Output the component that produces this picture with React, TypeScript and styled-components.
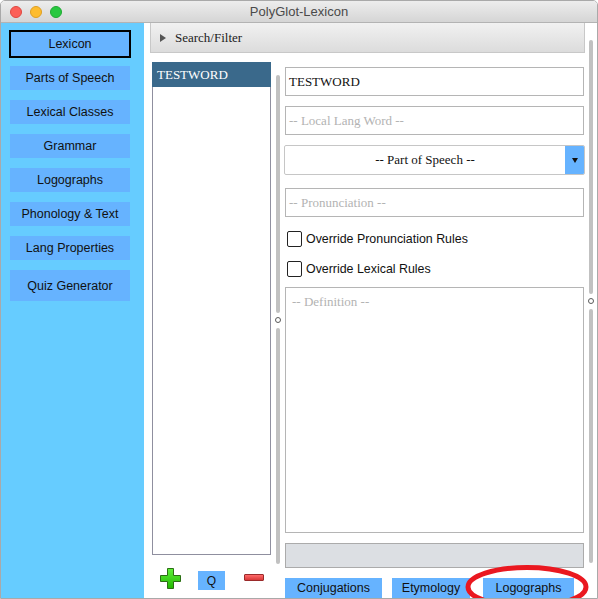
import React from "react";
import styled, { createGlobalStyle } from "styled-components";

const Global = createGlobalStyle`
  html, body { margin: 0; padding: 0; background: #ffffff; overflow: hidden; }
  * { box-sizing: border-box; }
`;

const SANS = `"Liberation Sans", Arial, Helvetica, sans-serif`;
const SERIF = `"Liberation Serif", "Times New Roman", serif`;

const Window = styled.div`
  position: relative;
  width: 598px;
  height: 599px;
  border: 1px solid #a9a9a9;
  border-radius: 5px 5px 0 0;
  overflow: hidden;
  background: #ffffff;
  display: flex;
  flex-direction: column;
  font-family: ${SANS};
`;

const TitleBar = styled.div`
  position: relative;
  height: 22px;
  flex: none;
  background: linear-gradient(#ededed, #d5d5d5);
  border-bottom: 1px solid #b3b3b3;
  display: flex;
  align-items: center;
  justify-content: center;
  font-size: 13px;
  color: #4a4a4a;
`;

const Lights = styled.div`
  position: absolute;
  left: 9px;
  top: 5px;
  display: flex;
  gap: 8px;
`;

const Light = styled.span<{ $c: string; $b: string }>`
  width: 12px;
  height: 12px;
  border-radius: 50%;
  background: ${(p) => p.$c};
  border: 0.5px solid ${(p) => p.$b};
`;

const Body = styled.div`
  flex: 1;
  display: flex;
  min-height: 0;
`;

const Sidebar = styled.div`
  width: 143px;
  flex: none;
  background: #66ccff;
  padding: 7px 0 0 8px;
  display: flex;
  flex-direction: column;
  align-items: flex-start;
`;

const NavButton = styled.div<{ $active?: boolean; $tall?: boolean }>`
  width: ${(p) => (p.$active ? 122 : 120)}px;
  height: ${(p) => (p.$active ? 28 : p.$tall ? 31 : 24)}px;
  margin-left: ${(p) => (p.$active ? 0 : 1)}px;
  margin-bottom: ${(p) => (p.$active ? 8 : 10)}px;
  background: #66b3ff;
  border: ${(p) => (p.$active ? "2px solid #000" : "none")};
  display: flex;
  align-items: center;
  justify-content: center;
  font-family: ${SANS};
  font-size: 12.5px;
  color: #111;
`;

const Main = styled.div`
  flex: 1;
  display: flex;
  min-width: 0;
`;

const ContentCol = styled.div`
  width: 441px;
  flex: none;
  padding-left: 6px;
  display: flex;
  flex-direction: column;
`;

const SearchBar = styled.div`
  height: 30px;
  flex: none;
  border: 1px solid #c8c8c8;
  border-top: none;
  background: linear-gradient(#f1f1f1, #dcdcdc);
  display: flex;
  align-items: center;
  padding-left: 9px;
  gap: 9px;
  font-family: ${SERIF};
  font-size: 13px;
  color: #222;
`;

const Triangle = styled.span`
  width: 0;
  height: 0;
  border-top: 4px solid transparent;
  border-bottom: 4px solid transparent;
  border-left: 6px solid #555;
`;

const Row = styled.div`
  display: flex;
  margin-top: 9px;
  flex: 1;
  min-height: 0;
`;

const ListCol = styled.div`
  width: 119px;
  margin-left: 2px;
  flex: none;
  display: flex;
  flex-direction: column;
`;

const ListBox = styled.div`
  height: 493px;
  border: 1px solid #8f8f9f;
  background: #fff;
`;

const ListItem = styled.div<{ $selected?: boolean }>`
  height: 25px;
  background: ${(p) => (p.$selected ? "#3a698b" : "transparent")};
  color: ${(p) => (p.$selected ? "#fff" : "#000")};
  font-family: ${SERIF};
  font-size: 13px;
  display: flex;
  align-items: center;
  padding-left: 5px;
  margin: -1px -1px 0 -1px;
`;

const ListActions = styled.div`
  display: flex;
  align-items: flex-start;
  margin-top: 13px;
  padding-left: 8px;
`;

const QButton = styled.div`
  width: 27px;
  height: 19px;
  margin: 3px 0 0 17px;
  background: #66b3ff;
  display: flex;
  align-items: center;
  justify-content: center;
  font-size: 12px;
  color: #111;
`;

const MinusIcon = styled.div`
  width: 20px;
  height: 7px;
  margin: 6px 0 0 19px;
  background: linear-gradient(#ff6a6a, #d83838);
  border: 1px solid #9a2a2a;
  border-radius: 1px;
`;

const Splitter = styled.div<{ $top: number; $first: number; $second: number }>`
  width: ${(p) => (p.$top === 13 ? 14 : 11)}px;
  flex: none;
  padding-top: ${(p) => p.$top}px;
  padding-left: ${(p) => (p.$top === 13 ? 5 : 4)}px;
  display: flex;
  flex-direction: column;
  align-items: flex-start;

  & > .a { height: ${(p) => p.$first}px; }
  & > .b { height: ${(p) => p.$second}px; }
`;

const Thumb = styled.div`
  width: 4px;
  background: #c1c1c1;
  border-radius: 2px;
`;

const Knob = styled.div`
  width: 6px;
  height: 6px;
  margin: 4px 0 5px -1px;
  border: 1.3px solid #5a5a5a;
  border-radius: 50%;
`;

const FormCol = styled.div`
  width: 299px;
  flex: none;
  padding-top: 5px;
  display: flex;
  flex-direction: column;
`;

const Field = styled.div<{ $gap: number; $placeholder?: boolean }>`
  height: 29px;
  margin-top: ${(p) => p.$gap}px;
  border: 1px solid #b5b5b5;
  background: #fff;
  display: flex;
  align-items: center;
  padding-left: 3px;
  font-family: ${SERIF};
  font-size: 13px;
  color: ${(p) => (p.$placeholder ? "#b3b3b3" : "#111")};
`;

const Select = styled.div`
  height: 30px;
  margin: 10px -1px 0 -1px;
  border: 1px solid #c6c6c6;
  border-radius: 2px;
  background: #fff;
  display: flex;
  overflow: hidden;
`;

const SelectText = styled.div`
  flex: 1;
  display: flex;
  align-items: center;
  justify-content: center;
  font-family: ${SERIF};
  font-size: 13px;
  color: #111;
`;

const SelectArrow = styled.div`
  width: 19px;
  background: #66b3ff;
  display: flex;
  align-items: center;
  justify-content: center;
  &::after {
    content: "";
    border-left: 3.5px solid transparent;
    border-right: 3.5px solid transparent;
    border-top: 5px solid #111;
  }
`;

const CheckRow = styled.label`
  display: flex;
  align-items: center;
  height: 17px;
  margin-top: 13px;
  padding-left: 2px;
  font-family: ${SANS};
  font-size: 12.4px;
  color: #111;
`;

const Box = styled.span`
  width: 15px;
  height: 16px;
  border: 1px solid #222;
  border-radius: 2px;
  background: #fff;
  margin-right: 4px;
  flex: none;
`;

const TextArea = styled.div`
  height: 246px;
  margin-top: 10px;
  border: 1px solid #b5b5b5;
  background: #fff;
  padding: 6px 0 0 6px;
  font-family: ${SERIF};
  font-size: 13px;
  color: #b3b3b3;
`;

const GrayField = styled.div`
  height: 25px;
  margin-top: 10px;
  border: 1px solid #ababab;
  background: #dcdfe3;
`;

const TabRow = styled.div`
  display: flex;
  margin-top: 10px;
`;

const TabButton = styled.div<{ $w: number; $gap: number }>`
  width: ${(p) => p.$w}px;
  margin-left: ${(p) => p.$gap}px;
  height: 20px;
  background: #66b3ff;
  display: flex;
  align-items: center;
  justify-content: center;
  font-family: ${SANS};
  font-size: 12.5px;
  color: #111;
`;

const Annotation = styled.svg`
  position: absolute;
  left: -1px;
  top: -1px;
  width: 598px;
  height: 599px;
  pointer-events: none;
`;

const PlusIcon = () => (
  <svg width="21" height="21" viewBox="0 0 21 21">
    <defs>
      <linearGradient id="pg" x1="0" y1="0" x2="0" y2="1">
        <stop offset="0" stopColor="#5ef03a" />
        <stop offset="1" stopColor="#22b800" />
      </linearGradient>
    </defs>
    <path
      d="M7.5 0.5h6v7h7v6h-7v7h-6v-7h-7v-6h7z"
      fill="url(#pg)"
      stroke="#2b6e14"
      strokeWidth="1"
    />
  </svg>
);

const navItems = [
  "Parts of Speech",
  "Lexical Classes",
  "Grammar",
  "Logographs",
  "Phonology & Text",
  "Lang Properties",
];

export default function App() {
  return (
    <>
      <Global />
      <Window>
        <TitleBar>
          <Lights>
            <Light $c="#fc5f57" $b="#df4740" />
            <Light $c="#fdbc2e" $b="#de9f22" />
            <Light $c="#28c840" $b="#1ea932" />
          </Lights>
          PolyGlot-Lexicon
        </TitleBar>
        <Body>
          <Sidebar>
            <NavButton $active>Lexicon</NavButton>
            {navItems.map((n) => (
              <NavButton key={n}>{n}</NavButton>
            ))}
            <NavButton $tall>Quiz Generator</NavButton>
          </Sidebar>
          <Main>
            <ContentCol>
              <SearchBar>
                <Triangle />
                Search/Filter
              </SearchBar>
              <Row>
                <ListCol>
                  <ListBox>
                    <ListItem $selected>TESTWORD</ListItem>
                  </ListBox>
                  <ListActions>
                    <PlusIcon />
                    <QButton>Q</QButton>
                    <MinusIcon />
                  </ListActions>
                </ListCol>
                <Splitter $top={13} $first={238} $second={236}>
                  <Thumb className="a" />
                  <Knob />
                  <Thumb className="b" />
                </Splitter>
                <FormCol>
                  <Field $gap={0}>TESTWORD</Field>
                  <Field $gap={10} $placeholder>
                    -- Local Lang Word --
                  </Field>
                  <Select>
                    <SelectText>-- Part of Speech --</SelectText>
                    <SelectArrow />
                  </Select>
                  <Field $gap={13} $placeholder>
                    -- Pronunciation --
                  </Field>
                  <CheckRow>
                    <Box />
                    Override Pronunciation Rules
                  </CheckRow>
                  <CheckRow>
                    <Box />
                    Override Lexical Rules
                  </CheckRow>
                  <TextArea>-- Definition --</TextArea>
                  <GrayField />
                  <TabRow>
                    <TabButton $w={97} $gap={0}>Conjugations</TabButton>
                    <TabButton $w={78} $gap={10}>Etymology</TabButton>
                    <TabButton $w={91} $gap={13}>Logographs</TabButton>
                  </TabRow>
                </FormCol>
              </Row>
            </ContentCol>
            <Splitter $top={17} $first={254} $second={254}>
              <Thumb className="a" />
              <Knob />
              <Thumb className="b" />
            </Splitter>
          </Main>
        </Body>
        <Annotation viewBox="0 0 598 599">
          <ellipse
            cx="527"
            cy="587"
            rx="59"
            ry="19.5"
            fill="none"
            stroke="#ea1820"
            strokeWidth="5"
          />
        </Annotation>
      </Window>
    </>
  );
}
